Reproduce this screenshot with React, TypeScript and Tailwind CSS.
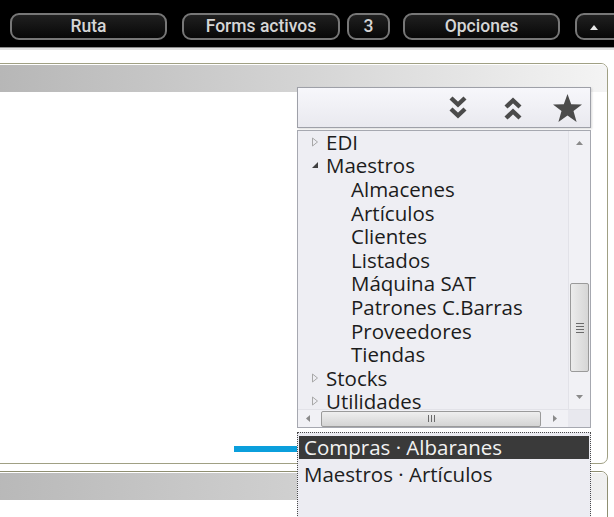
import React from "react";

type Row = { t: string; lvl: number; exp?: "open" | "closed" };

const rows: Row[] = [
  { t: "EDI", lvl: 0, exp: "closed" },
  { t: "Maestros", lvl: 0, exp: "open" },
  { t: "Almacenes", lvl: 1 },
  { t: "Artículos", lvl: 1 },
  { t: "Clientes", lvl: 1 },
  { t: "Listados", lvl: 1 },
  { t: "Máquina SAT", lvl: 1 },
  { t: "Patrones C.Barras", lvl: 1 },
  { t: "Proveedores", lvl: 1 },
  { t: "Tiendas", lvl: 1 },
  { t: "Stocks", lvl: 0, exp: "closed" },
  { t: "Utilidades", lvl: 0, exp: "closed" },
];

function TopButton({ label, className }: { label: React.ReactNode; className: string }) {
  return (
    <div
      className={
        "h-[27px] shrink-0 rounded-[9px] border-2 border-[#777777] bg-linear-to-b from-[#202020] to-[#080808] flex items-center text-[#d6d6d6] text-[17.5px] font-medium font-['Roboto',sans-serif] leading-none " +
        className
      }
    >
      {label}
    </div>
  );
}

function Expander({ exp }: { exp?: "open" | "closed" }) {
  if (exp === "open") {
    return (
      <svg width="8" height="8" viewBox="0 0 8 8" className="block">
        <polygon points="7,1 7,7 1,7" fill="#404040" />
      </svg>
    );
  }
  return (
    <svg width="8" height="10" viewBox="0 0 8 10" className="block">
      <polygon points="1.5,1 6.5,5 1.5,9" fill="none" stroke="#a8a8a8" strokeWidth="1" />
    </svg>
  );
}

function DoubleChevron({ up }: { up?: boolean }) {
  return (
    <svg width="20" height="28" viewBox="0 0 20 28" className="block">
      <g transform={up ? "rotate(180 10 14)" : undefined} fill="none" stroke="#4a4a4a" strokeWidth="4.4">
        <polyline points="3,4 10,10.5 17,4" />
        <polyline points="3,15 10,21.5 17,15" />
      </g>
    </svg>
  );
}

function Star() {
  return (
    <svg width="31" height="30" viewBox="0 0 31 30" className="block">
      <polygon
        points="15.5,1 19.2,11.2 30,11.4 21.5,18 24.6,29 15.5,22.6 6.4,29 9.5,18 1,11.4 11.8,11.2"
        fill="#4b4b4b"
      />
    </svg>
  );
}

export default function App() {
  return (
    <div className="relative w-[614px] h-[517px] overflow-hidden bg-white flex flex-col font-['Open_Sans',sans-serif]">
      {/* top bar */}
      <div className="h-[47px] bg-black flex items-start pt-[13px] pl-[10px] shrink-0 overflow-hidden">
        <TopButton label="Ruta" className="w-[157px] justify-center" />
        <TopButton label="Forms activos" className="w-[158px] justify-center ml-[15px]" />
        <TopButton label="3" className="w-[43px] justify-center ml-[7px]" />
        <TopButton label="Opciones" className="w-[157px] justify-center ml-[13px]" />
        <TopButton
          label={
            <svg width="10" height="6" viewBox="0 0 10 6" className="block">
              <polygon points="1,6 5,1 9,6" fill="#e6e6e6" />
            </svg>
          }
          className="w-[60px] justify-start pl-[12px] ml-[15px]"
        />
      </div>
      <div className="h-[1px] bg-[#8c8c8c] shrink-0" />
      <div className="h-[2px] bg-[#e2e2e2] shrink-0" />

      {/* panel 1 */}
      <div className="mt-[13px] -ml-[10px] mr-[6px] h-[401px] shrink-0 border border-[#a0a084] rounded-[7px] overflow-hidden bg-white">
        <div className="h-[28px] border-t border-white bg-linear-to-r from-[#b6b6b6] via-[#d4d4d4] to-[#f4f4f4]" />
      </div>

      {/* panel 2 */}
      <div className="mt-[7px] -ml-[10px] mr-[6px] h-[80px] shrink-0 border border-[#8f8f72] rounded-t-[7px] overflow-hidden bg-white">
        <div className="h-[28px] border-t border-white bg-linear-to-r from-[#b8b8b8] via-[#d0d0d0] to-[#f0f0f0]" />
      </div>

      {/* blue connector */}
      <div className="absolute left-[234px] top-[446px] w-[64px] h-[6px] bg-[#0b9fdc]" />

      {/* floating navigator */}
      <div className="absolute left-[297px] top-[87px] w-[294px] flex flex-col">
        {/* toolbar */}
        <div className="h-[41px] border border-[#9ea0a8] bg-linear-to-b from-[#f7f7fb] to-[#e9e9ef] flex items-center justify-end pr-[7px] shadow-[1px_1px_2px_rgba(0,0,0,0.15)]">
          <div className="mr-[35px]">
            <DoubleChevron />
          </div>
          <div className="mr-[29px]">
            <DoubleChevron up />
          </div>
          <Star />
        </div>

        {/* tree */}
        <div className="mt-[2px] h-[298px] border border-[#a6a8b0] bg-[#eeeef3] flex flex-col">
          <div className="h-[278px] flex">
            <div className="flex-1 overflow-hidden text-[20.5px] text-[#1c1c1c]">
              <div className="-mt-[1px]">
                {rows.map((r) => (
                  <div
                    key={r.t}
                    className={"h-[23.6px] leading-[22px] flex items-center whitespace-nowrap " + (r.lvl === 0 ? "pl-[13px]" : "pl-[53px]")}
                  >
                    {r.lvl === 0 && (
                      <div className="w-[15px] flex items-center">
                        <Expander exp={r.exp} />
                      </div>
                    )}
                    <span>{r.t}</span>
                  </div>
                ))}
              </div>
            </div>
            {/* vertical scrollbar */}
            <div className="w-[22px] border-l border-[#e2e2e8] bg-[#f1f1f5] flex flex-col">
              <div className="h-[24px] flex items-center justify-center">
                <svg width="7" height="4" viewBox="0 0 7 4"><polygon points="0,4 3.5,0 7,4" fill="#8a8a8a" /></svg>
              </div>
              <div className="flex-1 flex flex-col items-center">
                <div className="mt-[128px] w-[19px] h-[89px] rounded-[2px] border border-[#9a9a9a] bg-linear-to-r from-[#ececec] to-[#d6d6d6] flex items-center justify-center">
                  <div className="flex flex-col gap-[2px]">
                    <div className="w-[8px] h-[1px] bg-[#6a6a6a]" />
                    <div className="w-[8px] h-[1px] bg-[#6a6a6a]" />
                    <div className="w-[8px] h-[1px] bg-[#6a6a6a]" />
                    <div className="w-[8px] h-[1px] bg-[#6a6a6a]" />
                  </div>
                </div>
              </div>
              <div className="h-[24px] flex items-center justify-center">
                <svg width="7" height="4" viewBox="0 0 7 4"><polygon points="0,0 3.5,4 7,0" fill="#8a8a8a" /></svg>
              </div>
            </div>
          </div>
          {/* horizontal scrollbar */}
          <div className="h-[18px] flex border-t border-[#e2e2e8]">
            <div className="flex-1 flex items-center bg-[#f1f1f5]">
              <div className="w-[20px] flex items-center justify-center">
                <svg width="4" height="7" viewBox="0 0 4 7"><polygon points="4,0 0,3.5 4,7" fill="#8a8a8a" /></svg>
              </div>
              <div className="ml-[3px] w-[220px] h-[16px] rounded-[2px] border border-[#9a9a9a] bg-linear-to-b from-[#efefef] to-[#d4d4d4] flex items-center justify-center">
                <div className="flex gap-[2px]">
                  <div className="w-[1px] h-[7px] bg-[#6a6a6a]" />
                  <div className="w-[1px] h-[7px] bg-[#6a6a6a]" />
                  <div className="w-[1px] h-[7px] bg-[#6a6a6a]" />
                </div>
              </div>
              <div className="flex-1 flex items-center justify-center">
                <svg width="4" height="7" viewBox="0 0 4 7"><polygon points="0,0 4,3.5 0,7" fill="#8a8a8a" /></svg>
              </div>
            </div>
            <div className="w-[22px] bg-[#e8e8ee]" />
          </div>
        </div>

        {/* recent list */}
        <div className="mt-[4px] h-[100px] border border-dotted border-[#4a4a4a] bg-[#ececf2] text-[20.5px] pt-[3px] px-[1px]">
          <div className="h-[23px] leading-[23px] bg-[#3a3a3a] text-[#f2f2f2] pl-[5px] whitespace-nowrap">
            Compras · Albaranes
          </div>
          <div className="h-[30px] leading-[30px] text-[#202020] pl-[5px] whitespace-nowrap">
            Maestros · Artículos
          </div>
        </div>
      </div>
    </div>
  );
}
